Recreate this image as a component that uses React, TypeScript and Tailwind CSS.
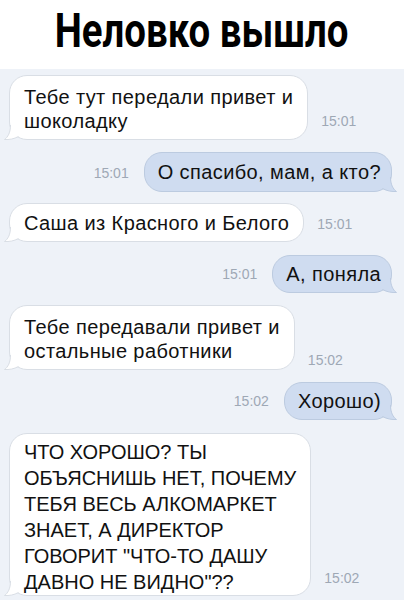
import React from "react";

type Msg = {
  side: "in" | "out";
  lines: string[];
  time: string;
  mt: string;
  pad: string;
  lead: string;
  track: string;
  timeMb: string;
};

const messages: Msg[] = [
  { side: "in", lines: ["Тебе тут передали привет и", "шоколадку"], time: "15:01", mt: "mt-[6px]", pad: "pt-[9px] pb-[6px]", lead: "leading-[24px]", track: "tracking-[0.4px]", timeMb: "mb-[12px]" },
  { side: "out", lines: ["О спасибо, мам, а кто?"], time: "15:01", mt: "mt-[12px]", pad: "py-[7px]", lead: "leading-[24px]", track: "tracking-[0.4px]", timeMb: "mb-[12px]" },
  { side: "in", lines: ["Саша из Красного и Белого"], time: "15:01", mt: "mt-[11px]", pad: "py-[6.5px]", lead: "leading-[24px]", track: "tracking-[0.4px]", timeMb: "mb-[11px]" },
  { side: "out", lines: ["А, поняла"], time: "15:01", mt: "mt-[13px]", pad: "py-[6px]", lead: "leading-[24px]", track: "tracking-[0.4px]", timeMb: "mb-[12px]" },
  { side: "in", lines: ["Тебе передавали привет и", "остальные работники"], time: "15:02", mt: "mt-[12px]", pad: "pt-[9px] pb-[6px]", lead: "leading-[24px]", track: "tracking-[0.4px]", timeMb: "mb-[3px]" },
  { side: "out", lines: ["Хорошо)"], time: "15:02", mt: "mt-[12px]", pad: "py-[6px]", lead: "leading-[24px]", track: "tracking-[0.4px]", timeMb: "mb-[12px]" },
  {
    side: "in",
    lines: ["ЧТО ХОРОШО? ТЫ", "ОБЪЯСНИШЬ НЕТ, ПОЧЕМУ", "ТЕБЯ ВЕСЬ АЛКОМАРКЕТ", "ЗНАЕТ, А ДИРЕКТОР", "ГОВОРИТ \"ЧТО-ТО ДАШУ", "ДАВНО НЕ ВИДНО\"??"],
    time: "15:02",
    mt: "mt-[13px]",
    pad: "pt-[5px] pb-0",
    lead: "leading-[26px]",
    track: "tracking-normal",
    timeMb: "mb-[11px]",
  },
];

function Tail({ side }: { side: "in" | "out" }) {
  const fill = side === "in" ? "#ffffff" : "#cfdcf0";
  const stroke = side === "in" ? "#d9dee5" : "#bccbe0";
  return (
    <svg
      width="16"
      height="16"
      viewBox="0 0 16 16"
      className={`absolute bottom-[-1px] ${side === "in" ? "left-[-6px]" : "right-[-6px] -scale-x-100"}`}
    >
      <path d="M6.5 1 C6.5 8.5 4 13 0.5 15.5 C5 15.8 10 15 14.5 12.5 L14.5 1 Z" fill={fill} />
      <path d="M6.5 1 C6.5 8.5 4 13 0.5 15.5 C5 15.8 10 15 14.5 12.5" fill="none" stroke={stroke} strokeWidth="1" />
    </svg>
  );
}

function Bubble({ m }: { m: Msg }) {
  const isIn = m.side === "in";
  return (
    <div
      className={`relative rounded-[18px] border text-[20px] text-[#111111] whitespace-nowrap ${m.pad} ${m.lead} ${m.track} ${
        isIn ? "px-[14px] bg-white border-[#d9dee5]" : "pl-[13px] pr-[10px] bg-[#cfdcf0] border-[#bccbe0]"
      }`}
    >
      {m.lines.map((l, i) => (
        <div key={i} className="relative z-10">
          {l}
        </div>
      ))}
      <Tail side={m.side} />
    </div>
  );
}

function Row({ m }: { m: Msg }) {
  const time = <span className={`text-[14px] leading-none text-[#9ea8b5] ${m.timeMb}`}>{m.time}</span>;
  if (m.side === "in") {
    return (
      <div className={`flex items-end gap-[13px] pl-[9px] ${m.mt}`}>
        <Bubble m={m} />
        {time}
      </div>
    );
  }
  return (
    <div className={`flex items-end justify-end gap-[15px] pr-[12px] ${m.mt}`}>
      {time}
      <Bubble m={m} />
    </div>
  );
}

export default function App() {
  return (
    <div className="w-[404px] h-[600px] overflow-hidden bg-[#eef2f8] font-['Liberation_Sans',Arial,sans-serif]">
      <div className="h-[69px] bg-white flex items-center justify-center pb-[8px]">
        <h1 className="inline-block scale-x-[0.8] text-[48px] font-bold leading-none text-black font-['Roboto',sans-serif]">
          Неловко вышло
        </h1>
      </div>
      <div className="flex flex-col">
        {messages.map((m, i) => (
          <Row key={i} m={m} />
        ))}
      </div>
    </div>
  );
}
